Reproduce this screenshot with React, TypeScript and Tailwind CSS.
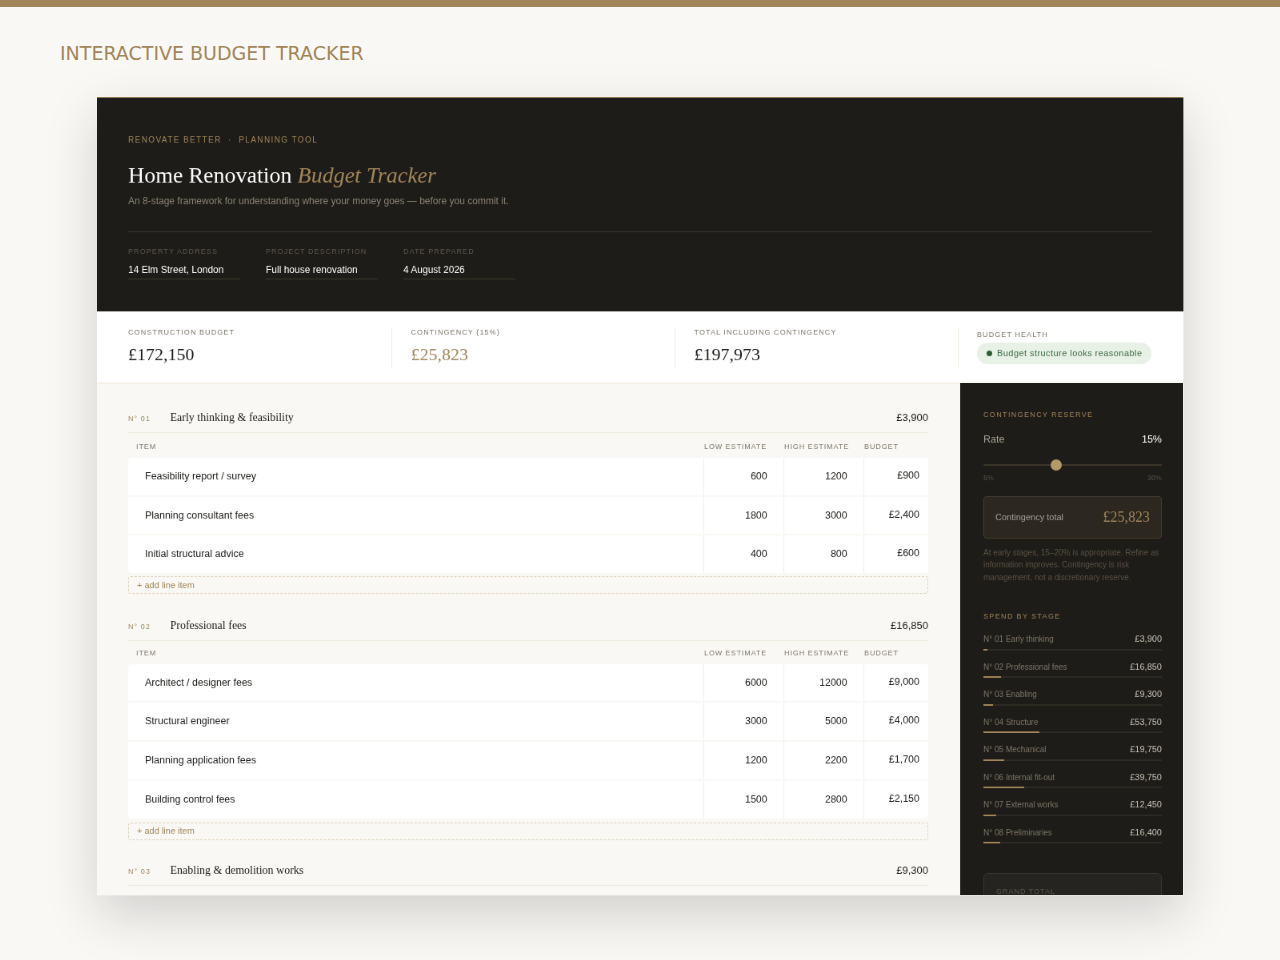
import React from 'react';

const serif = "font-['Liberation_Serif',serif]";

type Row = { item: string; low: number; high: number; budget: string };

const sections: { no: string; title: string; total: string; head: string; add: string; gap: string; rows: Row[] }[] = [
  {
    no: '01',
    title: 'Early thinking & feasibility',
    total: '£3,900',
    head: 'h-[31.25px] pt-[5.5px]',
    add: 'mt-[4px]',
    gap: 'mb-[27px]',
    rows: [
      { item: 'Feasibility report / survey', low: 600, high: 1200, budget: '£900' },
      { item: 'Planning consultant fees', low: 1800, high: 3000, budget: '£2,400' },
      { item: 'Initial structural advice', low: 400, high: 800, budget: '£600' },
    ],
  },
  {
    no: '02',
    title: 'Professional fees',
    total: '£16,850',
    head: 'h-[29px] pt-[3px]',
    add: 'mt-[5px]',
    gap: 'mb-[26px]',
    rows: [
      { item: 'Architect / designer fees', low: 6000, high: 12000, budget: '£9,000' },
      { item: 'Structural engineer', low: 3000, high: 5000, budget: '£4,000' },
      { item: 'Planning application fees', low: 1200, high: 2200, budget: '£1,700' },
      { item: 'Building control fees', low: 1500, high: 2800, budget: '£2,150' },
    ],
  },
];

const stages = [
  { name: 'N° 01 Early thinking', value: 3900 },
  { name: 'N° 02 Professional fees', value: 16850 },
  { name: 'N° 03 Enabling', value: 9300 },
  { name: 'N° 04 Structure', value: 53750 },
  { name: 'N° 05 Mechanical', value: 19750 },
  { name: 'N° 06 Internal fit-out', value: 39750 },
  { name: 'N° 07 External works', value: 12450 },
  { name: 'N° 08 Preliminaries', value: 16400 },
];

const fields = [
  { label: 'Property address', value: '14 Elm Street, London' },
  { label: 'Project description', value: 'Full house renovation' },
  { label: 'Date prepared', value: '4 August 2026' },
];

const SectionHead: React.FC<{ no: string; title: string; total: string }> = ({ no, title, total }) => (
  <div className="flex items-baseline border-b-[1.5px] border-[#efe9dd] pb-[7px] pt-[2.5px] leading-[20px]">
    <span className="w-[52.5px] text-[9px] tracking-[0.12em] text-[#a2865a]">N° {no}</span>
    <span className={`${serif} flex-1 text-[14px] text-[#1c1a17]`}>{title}</span>
    <span className="text-[13px] text-[#1c1a17]">{total}</span>
  </div>
);

const Section: React.FC<(typeof sections)[number]> = ({ no, title, total, head, add, gap, rows }) => (
  <div className={gap}>
    <SectionHead no={no} title={title} total={total} />
    <div className={`grid ${head} grid-cols-[1fr_100px_100px_80px] items-center text-[9px] uppercase tracking-[0.1em] text-[#7d766a]`}>
      <span className="pl-[10px]">Item</span>
      <span>Low estimate</span>
      <span>High estimate</span>
      <span>Budget</span>
    </div>
    <div className="overflow-hidden rounded-[4px] bg-[#faf8f5]">
      {rows.map((r) => (
        <div key={r.item} className="mb-[2px] grid h-[46.75px] grid-cols-[1fr_100px_100px_80px] bg-white text-[12.5px] leading-[46px] text-[#1c1a17] last:mb-0">
          <span className="pl-[21px]">{r.item}</span>
          <span className="-ml-[1.25px] border-l-[1.5px] border-[#f3eee5] pr-[21.25px] text-right">{r.low}</span>
          <span className="-ml-[1.25px] border-l-[1.5px] border-[#f3eee5] pr-[21.25px] text-right">{r.high}</span>
          <span className="-ml-[1.25px] border-l-[1.5px] border-[#f3eee5] pr-[11px] text-right leading-[44px]">{r.budget}</span>
        </div>
      ))}
    </div>
    <div className={`${add} flex h-[22px] items-center rounded-[3px] border border-dashed border-[#ddd1bb] pl-[10px] text-[11px] text-[#a2865a]`}>
      + add line item
    </div>
  </div>
);

export default function App() {
  return (
    <div className="h-[960px] overflow-hidden bg-[#faf8f5] font-['Liberation_Sans',sans-serif]">
      <div className="h-[7px] bg-[#a2865a]" />
      <h1 className="flex h-[90px] items-center pl-[60px] pt-[2px] font-['DejaVu_Sans',sans-serif] text-[19px] font-normal uppercase text-[#a2865a]">
        Interactive budget tracker
      </h1>
      <div className="ml-[97px] h-[997.5px] w-[1358px] origin-top-left scale-[0.8] overflow-hidden border-t border-[#a2865a] bg-[#faf8f5] shadow-[0_24px_60px_rgba(28,26,23,0.18)] will-change-transform">
        {/* header */}
        <div className="h-[267px] bg-[#1e1c18] pl-[39px] pr-[39px] pt-[44px]">
          <div className="text-[10px] leading-[17px] tracking-[0.14em] text-[#a2865a]">
            RENOVATE BETTER &nbsp;·&nbsp; PLANNING TOOL
          </div>
          <div className={`${serif} mt-[18px] text-[28px] leading-[36px] text-white`}>
            Home Renovation <em className="text-[#a2865a]">Budget Tracker</em>
          </div>
          <p className="mt-[5px] text-[12px] leading-[18px] text-[#8a8377]">
            An 8-stage framework for understanding where your money goes — before you commit it.
          </p>
          <div className="mt-[29px] flex gap-[32px] border-t border-[#3f382e] pt-[18px]">
            {fields.map((f) => (
              <div key={f.label} className="w-[140px]">
                <div className="text-[9px] uppercase leading-[12px] tracking-[0.12em] text-[#5f594f]">{f.label}</div>
                <div className="mt-[7.5px] border-b border-[#3f382e] pb-[2.5px] text-[12px] leading-[18px] text-white">{f.value}</div>
              </div>
            ))}
          </div>
        </div>

        {/* summary strip */}
        <div className="flex h-[90px] border-b border-[#efe9dd] bg-white pl-[39px] pt-[20px]">
          <div className="h-[50px] w-[329.5px] border-r border-[#efe9dd]">
            <div className="text-[9px] leading-[12px] tracking-[0.12em] text-[#7d766a]">CONSTRUCTION BUDGET</div>
            <div className={`${serif} mt-[8px] text-[22px] leading-[28px] text-[#1c1a17]`}>£172,150</div>
          </div>
          <div className="h-[50px] w-[354px] border-r border-[#efe9dd] pl-[24px]">
            <div className="text-[9px] leading-[12px] tracking-[0.12em] text-[#7d766a]">CONTINGENCY (15%)</div>
            <div className={`${serif} mt-[8px] text-[22px] leading-[28px] text-[#a2865a]`}>£25,823</div>
          </div>
          <div className="h-[50px] w-[354px] border-r border-[#efe9dd] pl-[24px]">
            <div className="text-[9px] leading-[12px] tracking-[0.12em] text-[#7d766a]">TOTAL INCLUDING CONTINGENCY</div>
            <div className={`${serif} mt-[8px] text-[22px] leading-[28px] text-[#1c1a17]`}>£197,973</div>
          </div>
          <div className="h-[50px] pl-[23.5px] pt-[3px]">
            <div className="text-[9px] leading-[12px] tracking-[0.12em] text-[#7d766a]">BUDGET HEALTH</div>
            <div className="mt-[4px] flex h-[27px] w-[218px] items-center gap-[6px] rounded-full bg-[#e8f1e6] pl-[12px] text-[11px] tracking-[0.04em] text-[#3a6b3f]">
              <span className="h-[7px] w-[7px] rounded-full bg-[#2f5e33]" />
              Budget structure looks reasonable
            </div>
          </div>
        </div>

        {/* main */}
        <div className="flex">
          <div className="flex-1 pl-[39px] pr-[40px] pt-[30px]">
            {sections.map((s) => (
              <Section key={s.no} {...s} />
            ))}
            <SectionHead no="03" title="Enabling & demolition works" total="£9,300" />
          </div>

          <aside className="h-[640px] w-[279px] bg-[#1e1c18] pl-[29px] pr-[27px] pt-[32.75px]">
            <div className="text-[9px] leading-[12px] tracking-[0.15em] text-[#a2865a]">CONTINGENCY RESERVE</div>
            <div className="mt-[16px] flex justify-between text-[12.5px] leading-[18px]">
              <span className="text-[#a8a196]">Rate</span>
              <span className="text-white">15%</span>
            </div>
            <div className="mt-[22.5px] flex h-[2px] items-center rounded-full bg-[#3f372b]">
              <span className="ml-[84px] h-[14px] w-[14px] rounded-full bg-[#b39a6b]" />
            </div>
            <div className="mt-[9px] flex justify-between text-[9px] leading-[12px] text-[#5a5246]">
              <span>5%</span>
              <span>30%</span>
            </div>
            <div className="mt-[17px] flex h-[53px] items-center justify-between rounded-[4px] border border-[#453c2e] bg-[#2c271f] px-[14px] pb-[1px]">
              <span className="text-[11px] text-[#a8a196]">Contingency total</span>
              <span className={`${serif} text-[18px] text-[#a2865a]`}>£25,823</span>
            </div>
            <p className="mt-[9.5px] text-[10px] leading-[15.6px] text-[#5a5246]">
              At early stages, 15–20% is appropriate. Refine as information improves. Contingency is risk management, not a discretionary reserve.
            </p>
            <div className="mt-[34px] text-[9px] leading-[12px] tracking-[0.15em] text-[#a2865a]">SPEND BY STAGE</div>
            <div className="mt-[15px]">
              {stages.map((s) => (
                <div key={s.name} className="h-[34.5px]">
                  <div className="flex h-[16px] items-center justify-between">
                    <span className="text-[10px] text-[#7d766a]">{s.name}</span>
                    <span className="text-[11px] text-[#c9c3b8]">£{s.value.toLocaleString('en-GB')}</span>
                  </div>
                  <div className="mt-[4px] h-[2px] bg-[#2e2a24]">
                    <div className="h-full bg-[#a2865a]" style={{ width: `${(s.value / 172150) * 100}%` }} />
                  </div>
                </div>
              ))}
            </div>
            <div className="mt-[24px] h-[80px] rounded-[6px] border border-[#3b3730] bg-[#262420] px-[15px] pt-[16px] text-[9px] leading-[12px] tracking-[0.11em] text-[#5f594f]">
              GRAND TOTAL
            </div>
          </aside>
        </div>
      </div>
    </div>
  );
}
